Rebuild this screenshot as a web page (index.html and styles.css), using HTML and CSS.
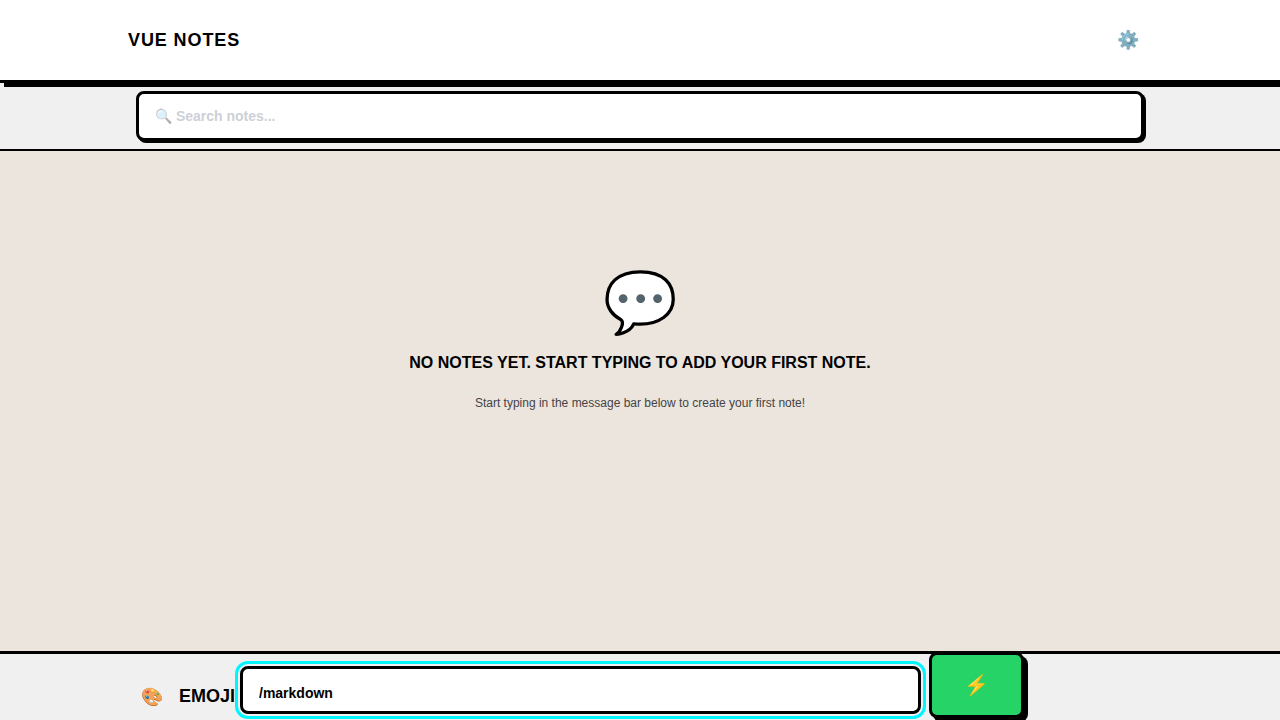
FILE: index.html
```html
<!DOCTYPE html>
<html lang="en">
<head>
<meta charset="utf-8">
<meta name="viewport" content="width=device-width, initial-scale=1">
<title>Vue Notes</title>
<link rel="stylesheet" href="styles.css">
</head>
<body>
<div class="app">
  <header class="header">
    <div class="container header-row">
      <h1 class="title">VUE NOTES</h1>
      <button class="settings" type="button" aria-label="Settings">⚙️</button>
    </div>
  </header>
  <div class="search-bar">
    <div class="container search-row">
      <input class="search" type="text" placeholder="🔍 Search notes..." aria-label="Search notes">
    </div>
  </div>
  <main class="main">
    <div class="empty-icon" aria-hidden="true">💬</div>
    <h2 class="empty-title">NO NOTES YET. START TYPING TO ADD YOUR FIRST NOTE.</h2>
    <p class="empty-text">Start typing in the message bar below to create your first note!</p>
  </main>
  <footer class="footer">
    <form class="container composer">
      <button class="emoji" type="button"><span>🎨</span><span>EMOJI</span></button>
      <input class="message" type="text" value="/markdown" aria-label="Message">
      <button class="send" type="button" aria-label="Send">⚡</button>
    </form>
  </footer>
</div>
</body>
</html>
```
FILE: styles.css
```css
* {
  box-sizing: border-box;
}

body {
  margin: 0;
  background: #ece5de;
  color: #000;
  font-family: "Liberation Sans", Arial, sans-serif;
}

.app {
  display: flex;
  flex-direction: column;
  height: 100vh;
  overflow: hidden;
}

.container {
  width: 100%;
  max-width: 1024px;
  margin: 0 auto;
}

button,
input {
  font-family: inherit;
  font-weight: 700;
  color: #000;
}

button {
  border: 0;
  background: none;
  cursor: pointer;
}

.header {
  position: relative;
  z-index: 1;
  padding: 16px 0;
  background: #fff;
  border-bottom: 3px solid #000;
  box-shadow: 4px 4px 0 #000;
}

.header-row {
  display: flex;
  align-items: center;
  justify-content: space-between;
}

.title {
  margin: 0;
  font-size: 18px;
  line-height: 28px;
  letter-spacing: 0.05em;
}

.settings {
  width: 48px;
  height: 48px;
  padding: 0;
  font-size: 18px;
}

.search-bar {
  padding: 8px 0;
  background: #f0f0f0;
  border-bottom: 2px solid #000;
}

.search-row {
  display: flex;
  padding: 0 8px;
}

.search {
  flex: 1;
  height: 50px;
  padding: 0 16px;
  background: #fff;
  border: 3px solid #000;
  border-radius: 8px;
  box-shadow: 2px 2px 0 #000;
  font-size: 14px;
}

.search::placeholder {
  color: #9ca3af;
  opacity: 0.5;
}

.main {
  flex: 1;
  display: flex;
  flex-direction: column;
  align-items: center;
  padding-top: 114px;
  text-align: center;
}

.empty-icon {
  font-size: 60px;
  line-height: 76px;
}

.empty-title {
  margin: 10px 0 0;
  font-size: 16px;
  line-height: 24px;
}

.empty-text {
  margin: 20px 0 0;
  color: #444;
  font-size: 12px;
  line-height: 16px;
}

.footer {
  height: 69px;
  background: #f0f0f0;
  border-top: 3px solid #000;
}

.composer {
  display: flex;
  align-items: center;
  gap: 8px;
  height: 72px;
  padding: 0 128px 0 8px;
}

.emoji {
  display: flex;
  flex: none;
  gap: 16px;
  width: 96px;
  padding: 14px 0 0 5px;
  font-size: 18px;
}

.message {
  flex: 1;
  min-width: 0;
  height: 48px;
  padding: 6px 16px 0;
  background: #fff;
  border: 3px solid #000;
  border-radius: 8px;
  outline: 3px solid #00f5ff;
  outline-offset: 2px;
  font-size: 14px;
}

.send {
  flex: none;
  width: 95px;
  height: 66px;
  margin-top: -10px;
  padding: 0;
  background: #25d366;
  border: 3px solid #000;
  border-radius: 8px;
  box-shadow: 4px 4px 0 #000;
  font-size: 20px;
}
```
